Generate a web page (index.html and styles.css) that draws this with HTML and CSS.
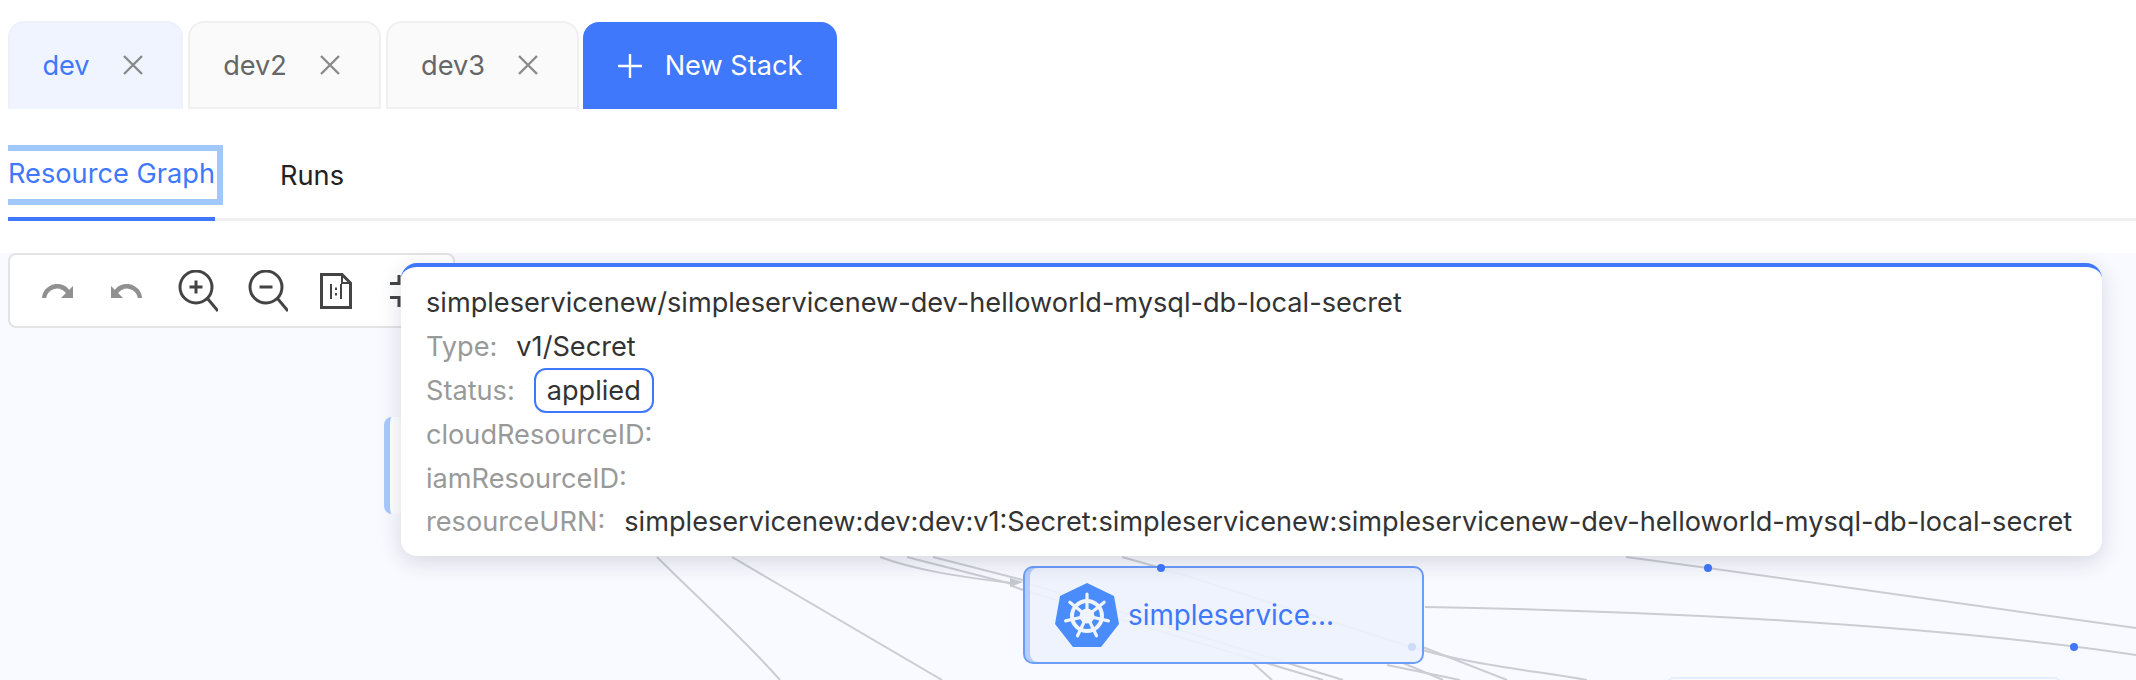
FILE: index.html
```html
<!DOCTYPE html>
<html lang="en">
<head>
<meta charset="utf-8">
<title>Stacks</title>
<link rel="stylesheet" href="styles.css">
</head>
<body>
<div class="page">
  <div class="stack-tabs">
    <div class="stack-tab active"><span>dev</span><svg class="close" viewBox="0 0 24 24"><path d="M3 3L21 21M21 3L3 21"/></svg></div>
    <div class="stack-tab"><span>dev2</span><svg class="close" viewBox="0 0 24 24"><path d="M3 3L21 21M21 3L3 21"/></svg></div>
    <div class="stack-tab"><span>dev3</span><svg class="close" viewBox="0 0 24 24"><path d="M3 3L21 21M21 3L3 21"/></svg></div>
    <div class="new-stack"><svg class="plus" viewBox="0 0 24 24"><path d="M12 0V24M0 12H24"/></svg><span>New Stack</span></div>
  </div>
  <div class="view-tabs">
    <div class="view-tab current">Resource Graph</div>
    <div class="view-tab">Runs</div>
  </div>
  <div class="canvas">
    <svg class="edges" viewBox="0 253 2136 427">
      <g class="edge">
        <path d="M657 557C700 600 745 640 780 680"/>
        <path d="M732 557L942 680"/>
        <path d="M880 557C915 570 960 577 1012 583"/>
        <path d="M907 557L1012 584"/>
        <path d="M933 557L1023 580"/>
        <path d="M1010 585L1023 590L1323 680"/>
        <path d="M1023 582L1343 680"/>
        <path d="M1122 557L1161 568L1412 647C1470 665 1530 670 1587 680"/>
        <path d="M1253 663L1272 680"/>
        <path d="M1387 665L1460 680"/>
        <path d="M1403 663L1443 680"/>
        <path d="M1420 646L1507 680"/>
        <path d="M1425 607C1600 610 1900 620 2136 655"/>
        <path d="M1626 557L1708 568L2136 628"/>
      </g>
      <path class="arrow" d="M1010 578L1023 582L1010 587Z"/>
    </svg>
    <div class="toolbar">
      <svg class="tool t-redo" viewBox="0 0 32 14"><path d="M3 14C4 5 13 1 19 2.500C22 3.200 25 5 27 8"/><path class="fill" d="M32 2V14H20Z"/></svg>
      <svg class="tool t-undo" viewBox="0 0 32 14"><path d="M29 14C28 5 19 1 13 2.500C10 3.200 7 5 5 8"/><path class="fill" d="M0 2V14H12Z"/></svg>
      <svg class="tool t-zoom" viewBox="0 0 40 42"><circle cx="18" cy="17" r="16"/><path d="M18 10.500V23.500M11.500 17H24.500M29.500 28.500L40 41"/></svg>
      <svg class="tool t-zoom" viewBox="0 0 40 42"><circle cx="18" cy="17" r="16"/><path d="M11.500 17H24.500M29.500 28.500L40 41"/></svg>
      <svg class="tool t-doc" viewBox="0 0 32 36"><path d="M1.500 1.500H22L30.500 10V34.500H1.500Z"/><path class="thin" d="M22 1.500V10H30.500M11 11V26M21 11V26M16 14.500V17M16 20V22.500"/></svg>
      <svg class="tool t-full" viewBox="0 0 32 34"><path d="M10 1V9.500H1M22 1V9.500H31M10 33V23.500H1M22 33V23.500H31"/></svg>
    </div>
    <div class="node side-node"></div>
    <div class="node main-node">
      <svg class="k8s" viewBox="0 0 64 64">
        <path class="hept" d="M32 0L59 13L64 41L46 64H18L0 41L5 13Z"/>
        <circle class="ring" cx="32" cy="33" r="15"/>
        <circle class="hub" cx="32" cy="33" r="7.500"/>
        <path class="spokes" d="M32 33L32 11M32 33L49.200 19.300M32 33L53.400 37.900M32 33L41.500 52.800M32 33L22.500 52.800M32 33L10.600 37.900M32 33L14.800 19.300"/>
      </svg>
      <span class="node-name">simpleservice...</span>
    </div>
    <div class="node low-node"></div>
    <i class="dot d1"></i><i class="dot d2"></i><i class="dot d3"></i><i class="dot faint"></i>
    <div class="popup">
      <div class="row"><span class="val">simpleservicenew/simpleservicenew-dev-helloworld-mysql-db-local-secret</span></div>
      <div class="row"><span class="key">Type:</span><span class="val">v1/Secret</span></div>
      <div class="row"><span class="key">Status:</span><span class="badge">applied</span></div>
      <div class="row"><span class="key">cloudResourceID:</span></div>
      <div class="row"><span class="key">iamResourceID:</span></div>
      <div class="row"><span class="key">resourceURN:</span><span class="val">simpleservicenew:dev:dev:v1:Secret:simpleservicenew:simpleservicenew-dev-helloworld-mysql-db-local-secret</span></div>
    </div>
  </div>
</div>
</body>
</html>
```
FILE: styles.css
```css
* { box-sizing: border-box; }
html, body { margin: 0; height: 100%; background: #fff; }
body { font-family: Inter, "Liberation Sans", sans-serif; overflow: hidden; }
.page { width: 2136px; height: 680px; padding-top: 21px; display: flex; flex-direction: column; overflow: hidden; }

.stack-tabs { display: flex; gap: 5px; padding-left: 8px; height: 88px; }
.stack-tab { height: 88px; display: flex; align-items: center; justify-content: center; gap: 31px; padding-right: 4px; font-size: 27.15px; color: #666; background: #fafafa; border: 2px solid #f0f0f0; border-radius: 16px 16px 0 0; width: 193px; }
.stack-tab.active { width: 175px; background: #f0f4fe; border-color: #eef1f9; border-bottom-color: #f0f4fe; color: #3f78fb; }
.close { width: 24px; height: 24px; fill: none; stroke: #8a8a8a; stroke-width: 2.4; }
.new-stack { height: 87px; width: 254px; margin-top: 1px; margin-left: -1px; background: #3f78fb; color: #fff; border-radius: 16px 16px 0 0; display: flex; align-items: center; justify-content: center; gap: 23px; font-size: 27.15px; }
.plus { width: 24px; height: 24px; fill: none; stroke: #fff; stroke-width: 2.4; }

.view-tabs { display: flex; margin: 36px 0 0 8px; height: 76px; gap: 65px; border-bottom: 3px solid #f0f0f0; font-size: 27.2px; color: #222; }
.view-tab { height: 76px; display: flex; align-items: center; padding-bottom: 16px; }
.view-tab.current { color: #3f78fb; position: relative; border-bottom: 4px solid #3f78fb; }
.view-tab.current::before { content: ""; box-sizing: border-box; position: absolute; left: 0; top: 0; width: 215px; height: 60px; border: 6px solid #a0c8fa; border-left: 0; }

.canvas { position: relative; flex: 1; margin-top: 32px; background: #f9faff; }
.edges { position: absolute; left: 0; top: 0; width: 2136px; height: 427px; }
.edge path { fill: none; stroke: #cbcdd4; stroke-width: 2; }
.arrow { fill: #c4c7ce; }

.toolbar { position: absolute; left: 8px; top: 0; width: 447px; height: 75px; background: #fff; border: 2px solid #e4e4e4; border-radius: 8px; display: flex; align-items: center; }
.tool { fill: none; stroke: #444; stroke-width: 3; flex: none; }
.t-redo { width: 32px; height: 14px; margin-left: 31px; stroke: #909090; stroke-width: 4.5; }
.t-undo { width: 32px; height: 14px; margin-left: 38px; stroke: #909090; stroke-width: 4.5; }
.fill { fill: #909090; stroke: none; }
.t-zoom { width: 40px; height: 42px; }
.t-undo + .t-zoom { margin-left: 35px; }
.t-zoom + .t-zoom { margin-left: 30px; }
.t-doc { width: 32px; height: 36px; margin-left: 32px; }
.thin { stroke-width: 2; }
.t-full { width: 32px; height: 34px; margin-left: 37px; }

.node { position: absolute; background: #fff; border-radius: 8px; }
.side-node { left: 384px; top: 164px; width: 60px; height: 97px; border-left: 6px solid #a9c9fb; }
.main-node { left: 1023px; top: 313px; width: 401px; height: 98px; background: rgba(237,242,253,.92); border: 2px solid #6b9dfb; box-shadow: inset 5px 0 0 #b4cdfb; border-radius: 10px; display: flex; align-items: center; padding-left: 30px; gap: 9px; }
.k8s { width: 64px; height: 64px; flex: none; }
.hept { fill: #4a8cfb; }
.ring { fill: none; stroke: #f0f4fe; stroke-width: 4; }
.hub { fill: #f0f4fe; }
.spokes { fill: none; stroke: #f0f4fe; stroke-width: 3.2; stroke-linecap: round; }
.node-name { font-size: 27.8px; color: #3f78fb; }
.low-node { left: 1666px; top: 424px; width: 396px; height: 60px; background: #fbfcff; border: 2px solid #e3eefe; }

.dot { position: absolute; width: 8px; height: 8px; border-radius: 50%; background: #3f78fb; }
.d1 { left: 1157px; top: 311px; }
.d2 { left: 1704px; top: 311px; }
.d3 { left: 2070px; top: 390px; }
.faint { left: 1408px; top: 390px; background: #cddcf9; }

.popup { position: absolute; left: 401px; top: 10px; width: 1701px; height: 293px; background: #fff; border-top: 4px solid #3f78fb; border-radius: 16px; box-shadow: 0 6px 22px rgba(30,40,80,.16); padding: 14px 25px 0; }
.row { height: 43.8px; display: flex; align-items: center; font-size: 27.15px; white-space: nowrap; }
.key { color: #999; margin-right: 19px; }
.val { color: #333; }
.badge { color: #333; border: 2px solid #3f78fb; border-radius: 12px; padding: 0 11px; height: 45px; display: flex; align-items: center; }
```
